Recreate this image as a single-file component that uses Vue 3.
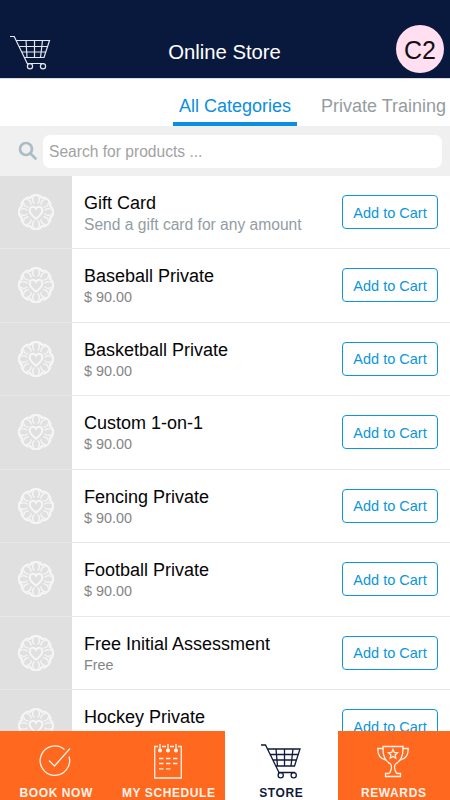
<script setup>
import { ref } from 'vue'

const search = ref('')

const products = [
  { name: 'Gift Card', note: 'Send a gift card for any amount', wide: true },
  { name: 'Baseball Private', note: '$ 90.00' },
  { name: 'Basketball Private', note: '$ 90.00' },
  { name: 'Custom 1-on-1', note: '$ 90.00' },
  { name: 'Fencing Private', note: '$ 90.00' },
  { name: 'Football Private', note: '$ 90.00' },
  { name: 'Free Initial Assessment', note: 'Free' },
  { name: 'Hockey Private', note: '$ 90.00' }
]

const lobes = [0, 45, 90, 135, 180, 225, 270, 315]
</script>

<template>
  <div class="screen">
    <header class="header">
      <svg class="header-cart" viewBox="0 0 42 36">
        <path d="M0 1.5h4.2L17.5 29M6 5.5h33.5L34 22.5H14.5M9 11.5H37.5M11.5 17H35.5M16 5.5l1 17M24.5 5.5v17M32.5 5.5l-2 17M17 28.5H34" />
        <circle cx="20" cy="31.3" r="2.6" />
        <circle cx="33" cy="31.3" r="2.6" />
      </svg>
      <h1 class="title">Online Store</h1>
      <div class="avatar">C2</div>
    </header>

    <nav class="tabs">
      <a class="tab active">All Categories</a>
      <a class="tab">Private Training</a>
    </nav>

    <div class="search">
      <svg class="search-icon" viewBox="0 0 20 20">
        <circle cx="8" cy="8" r="6" />
        <path d="M12.6 12.6l4.9 4.9" />
      </svg>
      <input v-model="search" class="search-input" type="text" placeholder="Search for products ...">
    </div>

    <main class="list">
      <div v-for="product in products" :key="product.name" class="row">
        <div class="thumb">
          <svg class="rosette" viewBox="-18 -18 36 36">
            <g v-for="angle in lobes" :key="angle" :transform="`rotate(${angle})`">
              <path class="lobe" d="M-5.6 -13.4C-5.5 -18.3 5.5 -18.3 5.6 -13.4" />
              <path d="M-1.6 -8.5C-3.6 -10.5 -3.8 -13.5 -2 -15.8M1.6 -8.5C3.6 -10.5 3.8 -13.5 2 -15.8" />
            </g>
            <path class="heart" d="M0 6.8C-3 4 -6.3 1.7 -6.3 -1.6C-6.3 -5.8 -1.6 -6.3 0 -3.2C1.6 -6.3 6.3 -5.8 6.3 -1.6C6.3 1.7 3 4 0 6.8Z" />
          </svg>
        </div>
        <div class="info">
          <p class="name">{{ product.name }}</p>
          <p class="note" :class="{ wide: product.wide }">{{ product.note }}</p>
        </div>
        <button class="add">Add to Cart</button>
      </div>
    </main>

    <footer class="bottom">
      <a class="item">
        <svg viewBox="0 0 40 36">
          <path d="M28.5 6.5A14.7 14.7 0 1 0 33 13.5" />
          <path d="M13 17.5l5.5 5.5L34 5.5" />
        </svg>
        <span>BOOK NOW</span>
      </a>
      <a class="item">
        <svg viewBox="0 0 40 36">
          <path d="M9 3.5H5.7v31.5h26.6v-31.5H29M13 3.5h4M21 3.5h4M11 1v7M19 1v7M27 1v7" />
          <path d="M10 15.5h4.5M17 15.5h4.5M24 15.5h4.5M10 20.5h4.5M17 20.5h4.5M24 20.5h4.5M10 25.8h4.5M17 25.8h4.5" />
          <circle class="dot" cx="11" cy="7.5" r="1.4" />
          <circle class="dot" cx="19" cy="7.5" r="1.4" />
          <circle class="dot" cx="27" cy="7.5" r="1.4" />
        </svg>
        <span>MY SCHEDULE</span>
      </a>
      <a class="item current">
        <svg viewBox="0 0 40 36">
          <path d="M0 2h4.5L18 29.5M6 6h33L33.5 23H14.5M8.5 11.5H37M11.5 17H35M15 6l1.5 17M23.5 6v17M32 6l-2 17M17 29.5h17" />
          <circle cx="19.7" cy="32.2" r="2.6" />
          <circle cx="32.7" cy="32.2" r="2.6" />
        </svg>
        <span>STORE</span>
      </a>
      <a class="item">
        <svg viewBox="0 0 40 36">
          <path d="M9 3.5H29C29.5 13 27 18 21.5 21C19.8 23 20.5 28 23 30.5H26.5V33.5H11.5V30.5H15C17.5 28 18.2 23 16.5 21C11 18 8.5 13 9 3.5Z" />
          <path d="M9.5 5.5H3.8C3.5 12.5 7 16 12 17M28.5 5.5H34.2C34.5 12.5 31 16 26 17" />
          <path d="M19 6.5l1.3 3 3.2.3-2.4 2.2.7 3.2L19 13.5l-2.8 1.7.7-3.2-2.4-2.2 3.2-.3z" />
        </svg>
        <span>REWARDS</span>
      </a>
    </footer>
  </div>
</template>

<style>
body {
  margin: 0;
}
</style>

<style scoped>
* {
  box-sizing: border-box;
  margin: 0;
  padding: 0;
  font-family: 'Liberation Sans', Arial, sans-serif;
}

svg {
  display: block;
  fill: none;
  stroke: currentColor;
}

.screen {
  display: flex;
  flex-direction: column;
  width: 450px;
  height: 800px;
  overflow: hidden;
  background: #fff;
}

.header {
  display: grid;
  grid-template-columns: 1fr auto 1fr;
  align-items: center;
  flex: none;
  height: 78px;
  padding: 23px 6px 3px 10px;
  background: #09193d;
  color: #fff;
}

.header-cart {
  width: 42px;
  height: 36px;
  margin-top: 8px;
  color: #e5e7ec;
  stroke-width: 1.2;
}

.title {
  padding: 6px 5px 0 0;
  font-size: 20.3px;
  font-weight: 400;
  line-height: 24px;
}

.avatar {
  display: flex;
  align-items: center;
  justify-content: center;
  justify-self: end;
  width: 48px;
  height: 48px;
  padding-top: 2px;
  border-radius: 50%;
  background: #ffdff0;
  color: #111;
  font-size: 25px;
}

.tabs {
  display: flex;
  flex: none;
  gap: 18px;
  height: 48px;
  padding-left: 173px;
  border-top: 1px solid #d8dbe2;
}

.tab {
  flex: none;
  height: 47px;
  padding: 16px 6px 0;
  color: #959ca1;
  font-size: 18px;
  line-height: 22px;
}

.tab.active {
  border-bottom: 4px solid #0a8ee0;
  color: #0a8ee0;
}

.search {
  display: flex;
  align-items: center;
  flex: none;
  gap: 5px;
  height: 50px;
  padding: 0 8px 0 18px;
  background: #f0f0f0;
}

.search-icon {
  width: 20px;
  height: 20px;
  color: #abbcc5;
  stroke-width: 2.7;
  stroke-linecap: round;
}

.search-input {
  flex: 1;
  height: 33px;
  padding: 1px 6px 0;
  border: 0;
  border-radius: 7px;
  outline: 0;
  background: #fff;
  font-size: 15.6px;
}

.search-input::placeholder {
  color: #a2a2a2;
  opacity: 1;
}

.list {
  flex: 1;
  min-height: 0;
  overflow: hidden;
}

.row {
  display: flex;
  height: 73.5px;
  padding-right: 12px;
  border-bottom: 1px solid #e7e8eb;
}

.row:first-child {
  height: 73px;
}

.thumb {
  display: flex;
  align-items: center;
  justify-content: center;
  flex: none;
  width: 72px;
  background: #e0e0e0;
}

.rosette {
  width: 36px;
  height: 36px;
  color: #f7f7f7;
  stroke-width: 1.3;
}

.rosette .lobe,
.rosette .heart {
  stroke-width: 1.9;
}

.rosette .heart {
  fill: #e0e0e0;
}

.info {
  flex: 1;
  padding: 16px 0 0 12px;
}

.name {
  color: #050505;
  font-size: 18px;
  line-height: 22px;
}

.note {
  color: #858585;
  font-size: 14.4px;
  line-height: 21px;
}

.note.wide {
  color: #929da3;
  font-size: 15.6px;
}

.add {
  align-self: center;
  width: 96px;
  height: 34px;
  padding-top: 1px;
  border: 1px solid #0b96da;
  border-radius: 4px;
  background: #fff;
  color: #0b96da;
  font-size: 14.5px;
}

.bottom {
  display: grid;
  grid-template-columns: repeat(4, 1fr);
  flex: none;
  height: 69px;
}

.item {
  display: flex;
  flex-direction: column;
  align-items: center;
  padding-top: 12px;
  background: #ff681f;
  color: #fff3e9;
  font-size: 12px;
  font-weight: 700;
  letter-spacing: 0.6px;
  line-height: 14px;
}

.item svg {
  width: 40px;
  height: 36px;
  margin-bottom: 7px;
  overflow: visible;
  stroke-width: 1.3;
}

.item .dot {
  fill: currentColor;
}

.item.current {
  background: #fff;
  color: #101a3c;
}
</style>
